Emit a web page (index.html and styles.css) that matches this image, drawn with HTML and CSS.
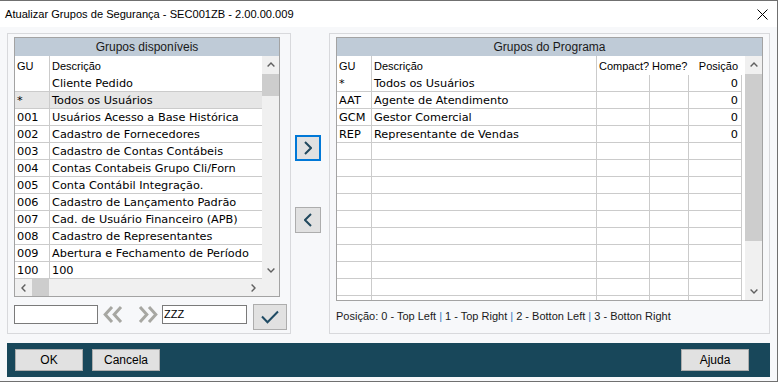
FILE: index.html
```html
<!DOCTYPE html>
<html>
<head>
<meta charset="utf-8">
<link rel="stylesheet" href="styles.css">
</head>
<body>
<div class="window">
  <div class="titlebar">
    <span class="title">Atualizar Grupos de Segurança - SEC001ZB - 2.00.00.009</span>
    <svg class="close" width="11" height="11" viewBox="0 0 11 11"><path d="M0.5 0.5L10.5 10.5M10.5 0.5L0.5 10.5" stroke="#000" stroke-width="1" fill="none"/></svg>
  </div>
  <div class="client">
    <div class="panels">
      <section class="panel panel-left">
        <div class="grid grid-left">
          <div class="caption">Grupos disponíveis</div>
          <div class="grid-main">
            <div class="table table-left">
              <div class="row head"><div class="c gu">GU</div><div class="c desc">Descrição</div></div>
              <div class="row"><div class="c gu"></div><div class="c desc">Cliente Pedido</div></div>
              <div class="row sel"><div class="c gu">*</div><div class="c desc">Todos os Usuários</div></div>
              <div class="row"><div class="c gu">001</div><div class="c desc">Usuários Acesso a Base Histórica</div></div>
              <div class="row"><div class="c gu">002</div><div class="c desc">Cadastro de Fornecedores</div></div>
              <div class="row"><div class="c gu">003</div><div class="c desc">Cadastro de Contas Contábeis</div></div>
              <div class="row"><div class="c gu">004</div><div class="c desc">Contas Contabeis Grupo Cli/Forn</div></div>
              <div class="row"><div class="c gu">005</div><div class="c desc">Conta Contábil Integração.</div></div>
              <div class="row"><div class="c gu">006</div><div class="c desc">Cadastro de Lançamento Padrão</div></div>
              <div class="row"><div class="c gu">007</div><div class="c desc">Cad. de Usuário Financeiro (APB)</div></div>
              <div class="row"><div class="c gu">008</div><div class="c desc">Cadastro de Representantes</div></div>
              <div class="row"><div class="c gu">009</div><div class="c desc">Abertura e Fechamento de Período</div></div>
              <div class="row"><div class="c gu">100</div><div class="c desc">100</div></div>
            </div>
            <div class="vscroll vscroll-left">
              <div class="sb-btn"><svg width="8" height="5" viewBox="0 0 8 5"><path d="M0.6 4.4L4 1L7.4 4.4" stroke="#606060" stroke-width="1.4" fill="none"/></svg></div>
              <div class="thumb thumb-left"></div>
              <div class="sb-fill"></div>
              <div class="sb-btn"><svg width="8" height="5" viewBox="0 0 8 5"><path d="M0.6 0.6L4 4L7.4 0.6" stroke="#606060" stroke-width="1.4" fill="none"/></svg></div>
            </div>
          </div>
          <div class="hscroll">
            <div class="sb-btn"><svg width="5" height="8" viewBox="0 0 5 8"><path d="M4.4 0.6L1 4L4.4 7.4" stroke="#606060" stroke-width="1.4" fill="none"/></svg></div>
            <div class="hthumb"></div>
            <div class="sb-fill"></div>
            <div class="sb-btn"><svg width="5" height="8" viewBox="0 0 5 8"><path d="M0.6 0.6L4 4L0.6 7.4" stroke="#606060" stroke-width="1.4" fill="none"/></svg></div>
            <div class="corner"></div>
          </div>
        </div>
        <div class="search">
          <div class="input"></div>
          <svg class="dbl dbl-left" width="20" height="17" viewBox="0 0 20 17"><path d="M9 1L2.2 8.5L9 16M18 1L11.2 8.5L18 16" stroke="#a7a7a2" stroke-width="3" fill="none"/></svg>
          <svg class="dbl dbl-right" width="20" height="17" viewBox="0 0 20 17"><path d="M2 1L8.8 8.5L2 16M11 1L17.8 8.5L11 16" stroke="#a7a7a2" stroke-width="3" fill="none"/></svg>
          <div class="input input-zzz">ZZZ</div>
          <div class="btn-check"><svg width="18" height="14" viewBox="0 0 18 14"><path d="M1 6.5L6.5 12.3L17 1.5" stroke="#1f4b64" stroke-width="2" fill="none"/></svg></div>
        </div>
      </section>
      <div class="mover">
        <div class="mv-btn focus"><svg width="8" height="14" viewBox="0 0 8 14"><path d="M1 1L7 7L1 13" stroke="#22495e" stroke-width="2" fill="none"/></svg></div>
        <div class="mv-btn"><svg width="8" height="14" viewBox="0 0 8 14"><path d="M7 1L1 7L7 13" stroke="#22495e" stroke-width="2" fill="none"/></svg></div>
      </div>
      <section class="panel panel-right">
        <div class="grid grid-right">
          <div class="caption">Grupos do Programa</div>
          <div class="grid-main grid-main-right">
            <div class="table table-right">
              <div class="row head"><div class="c gu">GU</div><div class="c d2">Descrição</div><div class="c cp nb">Compact?</div><div class="c hm nb">Home?</div><div class="c ps nb">Posição</div></div>
              <div class="row"><div class="c gu">*</div><div class="c d2">Todos os Usuários</div><div class="c cp"></div><div class="c hm"></div><div class="c ps">0</div></div>
              <div class="row"><div class="c gu">AAT</div><div class="c d2">Agente de Atendimento</div><div class="c cp"></div><div class="c hm"></div><div class="c ps">0</div></div>
              <div class="row"><div class="c gu">GCM</div><div class="c d2">Gestor Comercial</div><div class="c cp"></div><div class="c hm"></div><div class="c ps">0</div></div>
              <div class="row"><div class="c gu">REP</div><div class="c d2">Representante de Vendas</div><div class="c cp"></div><div class="c hm"></div><div class="c ps">0</div></div>
              <div class="row"><div class="c gu"></div><div class="c d2"></div><div class="c cp"></div><div class="c hm"></div><div class="c ps"></div></div>
              <div class="row"><div class="c gu"></div><div class="c d2"></div><div class="c cp"></div><div class="c hm"></div><div class="c ps"></div></div>
              <div class="row"><div class="c gu"></div><div class="c d2"></div><div class="c cp"></div><div class="c hm"></div><div class="c ps"></div></div>
              <div class="row"><div class="c gu"></div><div class="c d2"></div><div class="c cp"></div><div class="c hm"></div><div class="c ps"></div></div>
              <div class="row"><div class="c gu"></div><div class="c d2"></div><div class="c cp"></div><div class="c hm"></div><div class="c ps"></div></div>
              <div class="row"><div class="c gu"></div><div class="c d2"></div><div class="c cp"></div><div class="c hm"></div><div class="c ps"></div></div>
              <div class="row"><div class="c gu"></div><div class="c d2"></div><div class="c cp"></div><div class="c hm"></div><div class="c ps"></div></div>
              <div class="row"><div class="c gu"></div><div class="c d2"></div><div class="c cp"></div><div class="c hm"></div><div class="c ps"></div></div>
              <div class="row"><div class="c gu"></div><div class="c d2"></div><div class="c cp"></div><div class="c hm"></div><div class="c ps"></div></div>
              <div class="row"><div class="c gu"></div><div class="c d2"></div><div class="c cp"></div><div class="c hm"></div><div class="c ps"></div></div>
            </div>
            <div class="gap"></div>
            <div class="vscroll vscroll-right">
              <div class="sb-btn"><svg width="8" height="5" viewBox="0 0 8 5"><path d="M0.6 4.4L4 1L7.4 4.4" stroke="#606060" stroke-width="1.4" fill="none"/></svg></div>
              <div class="thumb thumb-right"></div>
              <div class="sb-fill"></div>
              <div class="sb-btn"><svg width="8" height="5" viewBox="0 0 8 5"><path d="M0.6 0.6L4 4L7.4 0.6" stroke="#606060" stroke-width="1.4" fill="none"/></svg></div>
            </div>
          </div>
        </div>
        <div class="legend">Posição: 0 - Top Left <span class="pipe">|</span> 1 - Top Right <span class="pipe">|</span> 2 - Botton Left <span class="pipe">|</span> 3 - Botton Right</div>
      </section>
    </div>
    <div class="footer">
      <div class="btn">OK</div>
      <div class="btn">Cancela</div>
      <div class="btn btn-help">Ajuda</div>
    </div>
  </div>
</div>
</body>
</html>
```

FILE: styles.css
```css
* { box-sizing: border-box; }
body {
  margin: 0;
  background: #ffffff;
  font-family: "Liberation Sans", Arial, sans-serif;
  color: #000;
}
.window {
  width: 778px;
  height: 382px;
  border-top: 1px solid #707070;
  border-right: 1px solid #707070;
  border-bottom: 1px solid #707070;
  background: #f7f8fa;
  display: flex;
  flex-direction: column;
}
.titlebar {
  height: 26px;
  flex: none;
  background: #ffffff;
  display: flex;
  align-items: center;
  justify-content: space-between;
  padding: 0 9px 0 5px;
}
.title { font-size: 11.1px; }
.close { display: block; }
.client {
  flex: 1;
  padding: 6px 7px 0 7px;
  display: flex;
  flex-direction: column;
}
.panels { display: flex; height: 301px; flex: none; }
.panel { border: 1px solid #d8d9dc; height: 301px; }
.panel-left { width: 284px; padding: 3px 10px 0 6px; }
.panel-right { width: 441px; padding: 3px 6px 0 6px; }
.mover {
  width: 38px;
  display: flex;
  flex-direction: column;
  padding: 102px 0 0 4px;
  gap: 46px;
}
.mv-btn {
  width: 26px;
  height: 26px;
  background: #e1e1e1;
  border: 1px solid #adadad;
  display: flex;
  align-items: center;
  justify-content: center;
}
.mv-btn.focus { border: 2px solid #0078d7; }
.mv-btn svg { display: block; }

.grid { border: 1px solid #a3a3a3; background: #fff; }
.grid-left { width: 266px; height: 260px; }
.grid-right { width: 427px; height: 264px; }
.caption {
  height: 18px;
  background: #bfcbd7;
  text-align: center;
  font-size: 12px;
  line-height: 18px;
  color: #1a1a1a;
}
.grid-main { display: flex; height: 223px; }
.grid-main-right { height: 244px; }
.table { overflow: hidden; }
.table-left { width: 247px; }
.table-right { width: 405px; }
.row {
  display: flex;
  height: 17px;
  border-bottom: 1px solid #cbcbcb;
  font-family: "DejaVu Sans", Verdana, sans-serif;
  font-size: 11.3px;
  align-items: stretch;
}
.row.head {
  height: 19px;
  border-bottom: none;
  font-family: "Liberation Sans", Arial, sans-serif;
  font-size: 11px;
}
.row.sel { background: #e6e6e6; }
.c {
  display: flex;
  align-items: center;
  padding-left: 2px;
  white-space: nowrap;
  overflow: hidden;
}
.c.gu { width: 35px; border-right: 1px solid #cbcbcb; flex: none; }
.c.desc { flex: 1; }
.c.d2 { width: 225px; border-right: 1px solid #cbcbcb; flex: none; }
.c.cp { width: 53px; border-right: 1px solid #cbcbcb; flex: none; }
.c.hm { width: 39px; border-right: 1px solid #cbcbcb; flex: none; }
.c.ps { width: 53px; border-right: 1px solid #cbcbcb; flex: none; justify-content: flex-end; padding-right: 3px; }
.row.head .c.nb { border-right-color: transparent; }
.gap { width: 3px; flex: none; }

.vscroll {
  width: 17px;
  flex: none;
  background: #f0f0f0;
  display: flex;
  flex-direction: column;
}
.sb-btn {
  width: 17px;
  height: 17px;
  flex: none;
  display: flex;
  align-items: center;
  justify-content: center;
}
.sb-btn svg { display: block; }
.thumb { background: #cdcdcd; margin: 1px 0 0 0; flex: none; }
.thumb-left { height: 22px; }
.thumb-right { height: 167px; }
.sb-fill { flex: 1; }

.hscroll {
  height: 17px;
  background: #f0f0f0;
  display: flex;
}
.hthumb { width: 17px; background: #cdcdcd; flex: none; }
.hscroll .sb-fill { flex: 1; }
.corner { width: 17px; flex: none; background: #f0f0f0; }

.search {
  display: flex;
  align-items: flex-start;
  margin-top: 7px;
}
.input {
  width: 84px;
  height: 19px;
  margin-top: 1px;
  border: 1px solid #7a7a7a;
  background: #fff;
  font-size: 11px;
  line-height: 17px;
  padding-left: 1px;
  flex: none;
}
.input-zzz { width: 85px; margin-left: 4px; }
.dbl { display: block; flex: none; margin-top: 2px; }
.dbl-left { margin-left: 5px; }
.dbl-right { margin-left: 15px; }
.btn-check {
  width: 34px;
  height: 26px;
  margin-left: 6px;
  background: #e1e1e1;
  border: 1px solid #adadad;
  display: flex;
  align-items: center;
  justify-content: center;
  flex: none;
}
.btn-check svg { display: block; }

.legend {
  margin-top: 9px;
  font-size: 11px;
  color: #1a1a1a;
  white-space: nowrap;
}
.pipe { color: #2f7bbf; }

.footer {
  margin-top: 9px;
  height: 34px;
  flex: none;
  background: #18475a;
  display: flex;
  align-items: flex-start;
  padding: 6px 21px 0 8px;
  gap: 9px;
}
.btn {
  width: 68px;
  height: 22px;
  background: #e1e1e1;
  border: 1px solid #adadad;
  font-size: 12px;
  display: flex;
  align-items: center;
  justify-content: center;
}
.btn-help { margin-left: auto; }
```
